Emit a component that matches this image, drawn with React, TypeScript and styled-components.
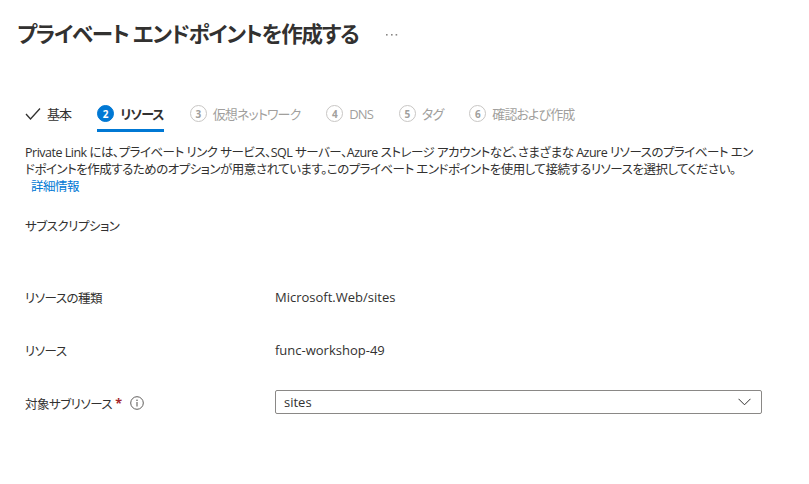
import React from 'react';
import styled, { createGlobalStyle, css } from 'styled-components';

const GlobalStyle = createGlobalStyle`
  html, body {
    margin: 0;
    padding: 0;
    background: #ffffff;
  }

  body {
    font-family: "Open Sans", "Noto Sans CJK JP", sans-serif;
    font-feature-settings: "palt";
    color: #323130;
  }
`;

const Page = styled.div`
  width: 809px;
  height: 484px;
  box-sizing: border-box;
  padding: 18px 0 0 25px;
  overflow: hidden;
`;

const Header = styled.div`
  display: flex;
  align-items: center;
  margin-left: -8px;
  height: 32px;
`;

const Title = styled.h1`
  margin: 0;
  font-size: 21.5px;
  line-height: 32px;
  font-weight: 600;
  color: #323130;
  letter-spacing: -1.2px;
  white-space: nowrap;
`;

const MoreButton = styled.span`
  display: inline-flex;
  align-items: center;
  margin-left: 28px;
  margin-top: 2px;
  color: #605e5c;
`;

const Steps = styled.div`
  display: flex;
  align-items: stretch;
  gap: 26px;
  margin-top: 48px;
  height: 34px;
`;

const Step = styled.div<{ $active?: boolean; $disabled?: boolean }>`
  display: flex;
  align-items: center;
  gap: 6px;
  box-sizing: border-box;
  border-bottom: 3px solid transparent;
  font-size: 13px;
  letter-spacing: -0.9px;
  color: #323130;

  ${({ $active }) => $active && css`
    border-bottom-color: #0078d4;
    font-weight: 700;
  `}

  ${({ $disabled }) => $disabled && css`
    color: #a19f9d;
  `}
`;

const StepNumber = styled.span<{ $active?: boolean }>`
  display: inline-flex;
  align-items: center;
  justify-content: center;
  box-sizing: border-box;
  width: 17px;
  height: 17px;
  border-radius: 50%;
  font-size: 10px;
  font-weight: 700;
  letter-spacing: 0;
  line-height: 1;
  border: 1px solid #c8c6c4;
  color: #a19f9d;

  ${({ $active }) => $active && css`
    background: #0078d4;
    border-color: #0078d4;
    color: #ffffff;
  `}
`;

const Description = styled.p`
  margin: 12px 0 0;
  font-size: 12.5px;
  line-height: 17px;
  letter-spacing: -0.5px;
  white-space: nowrap;
  color: #323130;
`;

const LearnMore = styled.a`
  display: inline-block;
  margin-left: 6px;
  color: #0078d4;
  text-decoration: none;
`;

const Form = styled.div`
  margin-top: 18px;
  display: flex;
  flex-direction: column;
`;

const Row = styled.div<{ $gap?: number }>`
  display: grid;
  grid-template-columns: 250px 487px;
  align-items: center;
  min-height: 24px;
  margin-bottom: ${({ $gap }) => $gap ?? 29}px;
`;

const Label = styled.div`
  display: flex;
  align-items: center;
  font-size: 12.5px;
  letter-spacing: -0.5px;
  color: #323130;
`;

const Required = styled.span`
  color: #a4262c;
  font-weight: 700;
  letter-spacing: 0;
  margin: 0 8px 0 3px;
`;

const Value = styled.div`
  font-size: 13px;
  color: #323130;
`;

const Select = styled.div`
  display: flex;
  align-items: center;
  justify-content: space-between;
  box-sizing: border-box;
  height: 24px;
  margin-top: -2px;
  padding: 0 10px 0 8px;
  border: 1px solid #8a8886;
  border-radius: 2px;
  font-size: 13px;
  color: #323130;
`;

const Check = () => (
  <svg width="16" height="14" viewBox="0 0 16 14">
    <polyline points="1,7 5.5,12 15,1.5" fill="none" stroke="#323130" strokeWidth="1.3" />
  </svg>
);

const Info = () => (
  <svg width="14" height="14" viewBox="0 0 14 14">
    <circle cx="7" cy="7" r="6.3" fill="none" stroke="#605e5c" strokeWidth="1" />
    <circle cx="7" cy="4.2" r="0.8" fill="#605e5c" />
    <line x1="7" y1="6" x2="7" y2="10.5" stroke="#605e5c" strokeWidth="1.1" />
  </svg>
);

const Chevron = () => (
  <svg width="13" height="8" viewBox="0 0 13 8">
    <polyline points="0.5,0.8 6.5,6.8 12.5,0.8" fill="none" stroke="#323130" strokeWidth="1" />
  </svg>
);

const Dots = () => (
  <svg width="12" height="4" viewBox="0 0 12 4">
    <rect x="0" y="1" width="1.6" height="1.6" fill="#8a8886" />
    <rect x="5" y="1" width="1.6" height="1.6" fill="#8a8886" />
    <rect x="9.6" y="1" width="1.6" height="1.6" fill="#8a8886" />
  </svg>
);

const App = () => (
  <>
    <GlobalStyle />
    <Page>
      <Header>
        <Title>プライベート エンドポイントを作成する</Title>
        <MoreButton><Dots /></MoreButton>
      </Header>

      <Steps>
        <Step><Check />基本</Step>
        <Step $active><StepNumber $active>2</StepNumber>リソース</Step>
        <Step $disabled><StepNumber>3</StepNumber>仮想ネットワーク</Step>
        <Step $disabled><StepNumber>4</StepNumber>DNS</Step>
        <Step $disabled><StepNumber>5</StepNumber>タグ</Step>
        <Step $disabled><StepNumber>6</StepNumber>確認および作成</Step>
      </Steps>

      <Description>
        Private Link には、プライベート リンク サービス、SQL サーバー、Azure ストレージ アカウントなど、さまざまな Azure リソースのプライベート エン<br />
        ドポイントを作成するためのオプションが用意されています。このプライベート エンドポイントを使用して接続するリソースを選択してください。<br />
        <LearnMore href="#">詳細情報</LearnMore>
      </Description>

      <Form>
        <Row $gap={48}>
          <Label>サブスクリプション</Label>
        </Row>
        <Row>
          <Label>リソースの種類</Label>
          <Value>Microsoft.Web/sites</Value>
        </Row>
        <Row>
          <Label>リソース</Label>
          <Value>func-workshop-49</Value>
        </Row>
        <Row>
          <Label>対象サブリソース<Required>*</Required><Info /></Label>
          <Select>
            <span>sites</span>
            <Chevron />
          </Select>
        </Row>
      </Form>
    </Page>
  </>
);

export default App;
